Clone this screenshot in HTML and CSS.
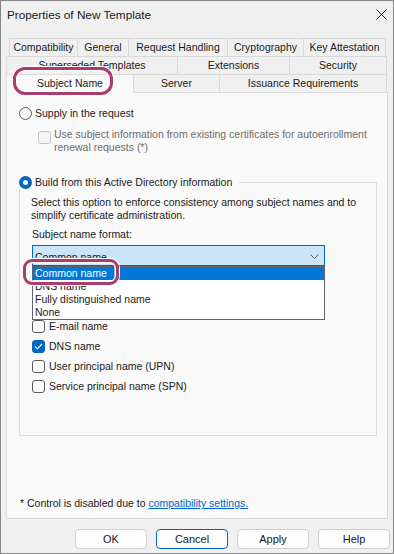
FILE: index.html
```html
<!DOCTYPE html>
<html lang="en">
  <head>
    <meta charset="UTF-8" />
    <meta name="viewport" content="width=device-width, initial-scale=1.0" />
    <title>Properties of New Template</title>
    <link rel="stylesheet" href="styles.css">
  </head>
  <body>
    <div class="window">
      <div class="titlebar">
        <span class="title">Properties of New Template</span>
        <svg class="close" width="11" height="11" viewBox="0 0 11 11">
          <path d="M0.5 0.5 L10.5 10.5 M10.5 0.5 L0.5 10.5" stroke="#1a1a1a" stroke-width="1" fill="none" />
        </svg>
      </div>

      <div class="tabs">
        <div class="tab-row row-top">
          <div class="tab tab-compat">Compatibility</div>
          <div class="tab tab-general">General</div>
          <div class="tab tab-request">Request Handling</div>
          <div class="tab tab-crypto">Cryptography</div>
          <div class="tab tab-key last">Key Attestation</div>
        </div>
        <div class="tab-row">
          <div class="tab tab-superseded">Superseded Templates</div>
          <div class="tab tab-extensions">Extensions</div>
          <div class="tab tab-security last">Security</div>
        </div>
        <div class="tab-row">
          <div class="tab tab-subject active">Subject Name</div>
          <div class="tab tab-server">Server</div>
          <div class="tab tab-issuance last">Issuance Requirements</div>
        </div>
        <div class="callout callout-tab"></div>
      </div>

      <div class="panel">
        <div class="option option-first">
          <span class="radio"></span>
          <span>Supply in the request</span>
        </div>
        <div class="sub-option">
          <span class="checkbox disabled"></span>
          <span class="sub-text">Use subject information from existing certificates for autoenrollment renewal requests (*)</span>
        </div>

        <fieldset class="group">
          <legend class="group-legend">
            <span class="option">
              <span class="radio checked"></span>
              <span>Build from this Active Directory information</span>
            </span>
          </legend>
          <div class="group-body">
            <p class="group-desc">Select this option to enforce consistency among subject names and to simplify certificate administration.</p>
            <div class="field-label">Subject name format:</div>
            <div class="combo-wrap">
              <div class="combo">
                <span>Common name</span>
                <svg class="chevron" width="9" height="5" viewBox="0 0 9 5">
                  <path d="M0.5 0.5 L4.5 4.5 L8.5 0.5" stroke="#5c5c5c" stroke-width="1" fill="none" />
                </svg>
              </div>
              <div class="dropdown">
                <div class="dd-item selected">Common name</div>
                <div class="dd-item">DNS name</div>
                <div class="dd-item">Fully distinguished name</div>
                <div class="dd-item">None</div>
              </div>
              <div class="callout callout-item"></div>
            </div>
            <!-- the open list hides the rows between the combo and the check list -->
            <div class="check-list">
              <div class="check-row">
                <span class="checkbox"></span>
                <span>E-mail name</span>
              </div>
              <div class="check-row">
                <span class="checkbox checked">
                  <svg width="9" height="7" viewBox="0 0 9 7">
                    <path d="M1 3.5 L3.4 5.8 L8 1" stroke="#fff" stroke-width="1.1" fill="none" />
                  </svg>
                </span>
                <span>DNS name</span>
              </div>
              <div class="check-row">
                <span class="checkbox"></span>
                <span>User principal name (UPN)</span>
              </div>
              <div class="check-row">
                <span class="checkbox"></span>
                <span>Service principal name (SPN)</span>
              </div>
            </div>
          </div>
        </fieldset>

        <div class="footnote">* Control is disabled due to <a href="#" class="link">compatibility settings.</a></div>
      </div>

      <div class="buttons">
        <button class="btn">OK</button>
        <button class="btn default">Cancel</button>
        <button class="btn">Apply</button>
        <button class="btn">Help</button>
      </div>
    </div>
  </body>
</html>
```

FILE: styles.css
```css
* {
  box-sizing: border-box;
}
body {
  margin: 0;
  font-family: "Liberation Sans", Arial, sans-serif;
  font-size: 10.5px;
  color: #1a1a1a;
}
.window {
  width: 394px;
  height: 554px;
  border: 1px solid #868686;
  background-color: #f0f0f0;
  display: flex;
  flex-direction: column;
}
.titlebar {
  height: 27px;
  display: flex;
  align-items: center;
  justify-content: space-between;
  padding: 0 6px 0 6px;
  font-size: 11.75px;
}

/* tabs */
.tabs {
  position: relative;
  margin: 10px 5px 0;
}
.tab-row {
  display: flex;
  height: 18px;
}
.row-top {
  margin-left: 3px;
}
.tab {
  border: 1px solid #d9d9d9;
  border-right: none;
  border-bottom: none;
  text-align: center;
  line-height: 17px;
  white-space: nowrap;
}
.tab.last {
  border-right: 1px solid #d9d9d9;
}
.tab.active {
  position: relative;
  z-index: 1;
  height: 19px;
  background-color: #f9f9f9;
}
.tab-compat { width: 68px; }
.tab-general { width: 51px; }
.tab-request { width: 99px; }
.tab-crypto { width: 76px; }
.tab-key { width: 83px; }
.tab-superseded { width: 171px; }
.tab-extensions { width: 112px; }
.tab-security { width: 98px; }
.tab-subject { width: 127px; }
.tab-server { width: 86px; }
.tab-issuance { width: 168px; }

/* highlight rings */
.callout {
  position: absolute;
  z-index: 3;
  border: 3px solid #ad3b6b;
  box-shadow: inset 0 0 0 1.5px #fff, 0 0 0 1px #fff;
}
.callout-tab {
  left: 7px;
  top: 29px;
  width: 100px;
  height: 28px;
  border-radius: 12px;
}
.callout-item {
  left: -9px;
  top: 14px;
  width: 96px;
  height: 26px;
  border-radius: 9px;
}

/* tab page */
.panel {
  height: 427px;
  margin: 0 5px;
  border: 1px solid #d9d9d9;
  background-color: #f9f9f9;
  display: flex;
  flex-direction: column;
}
.option {
  display: flex;
  align-items: center;
  gap: 3px;
  line-height: 13px;
}
.option-first {
  margin: 14px 0 0 12px;
}
.radio {
  width: 13px;
  height: 13px;
  border: 1px solid #5f5f5f;
  border-radius: 50%;
  background-color: #f7f7f7;
  flex: none;
}
.radio.checked {
  border: 4px solid #0067c0;
  background-color: #fff;
}
.sub-option {
  display: flex;
  gap: 3px;
  margin: 8px 0 0 31px;
  line-height: 13px;
  color: #6d6d6d;
}
.sub-text {
  width: 320px;
}
.checkbox {
  width: 13px;
  height: 13px;
  border: 1px solid #5a5a5a;
  border-radius: 3px;
  background-color: #fbfbfb;
  flex: none;
  display: flex;
  align-items: center;
  justify-content: center;
}
.checkbox.disabled {
  margin-top: 3px;
  border-color: #c4c4c4;
  background-color: #f5f5f5;
}
.checkbox.checked {
  border-color: #0067c0;
  background-color: #0067c0;
}

.group {
  width: 358px;
  height: 260px;
  margin: 22px 0 0 12px;
  padding: 0;
  border: 1px solid #dcdcdc;
}
.group-legend {
  margin-left: -1px;
  padding: 0 7px 0 0;
}
.group-body {
  padding: 0 10px 0 12px;
}
.group-desc {
  margin: 7px 0 0 -1px;
  line-height: 13px;
}
.field-label {
  margin-top: 6px;
  line-height: 13px;
}
.combo-wrap {
  position: relative;
  width: 293px;
  margin-top: 4px;
}
.combo {
  height: 21px;
  border: 1px solid #0067c0;
  background-color: #cce4f7;
  display: flex;
  align-items: center;
  justify-content: space-between;
  padding: 2px 5px 0 2px;
}
.dropdown {
  position: absolute;
  z-index: 2;
  left: 0;
  top: 21px;
  width: 293px;
  border: 1px solid #646464;
  background-color: #fff;
}
.dd-item {
  height: 13px;
  line-height: 13px;
  padding-left: 2px;
}
.dd-item.selected {
  background-color: #0078d7;
  color: #fff;
}
.check-list {
  margin-top: 50px;
}
.check-row {
  display: flex;
  align-items: center;
  gap: 4px;
  height: 20px;
}

.footnote {
  margin: auto 0 8px 13px;
  line-height: 13px;
}
.link {
  color: #0066cc;
}

/* dialog buttons */
.buttons {
  display: flex;
  justify-content: flex-end;
  gap: 9px;
  margin-top: 10px;
  padding-right: 3px;
}
.btn {
  width: 72px;
  height: 20px;
  border: 1px solid #d0d0d0;
  border-radius: 4px;
  background-color: #fdfdfd;
  font-family: "Liberation Sans", Arial, sans-serif;
  font-size: 11px;
  color: #1a1a1a;
  padding: 0;
}
.btn.default {
  border-color: #0067c0;
}
```
